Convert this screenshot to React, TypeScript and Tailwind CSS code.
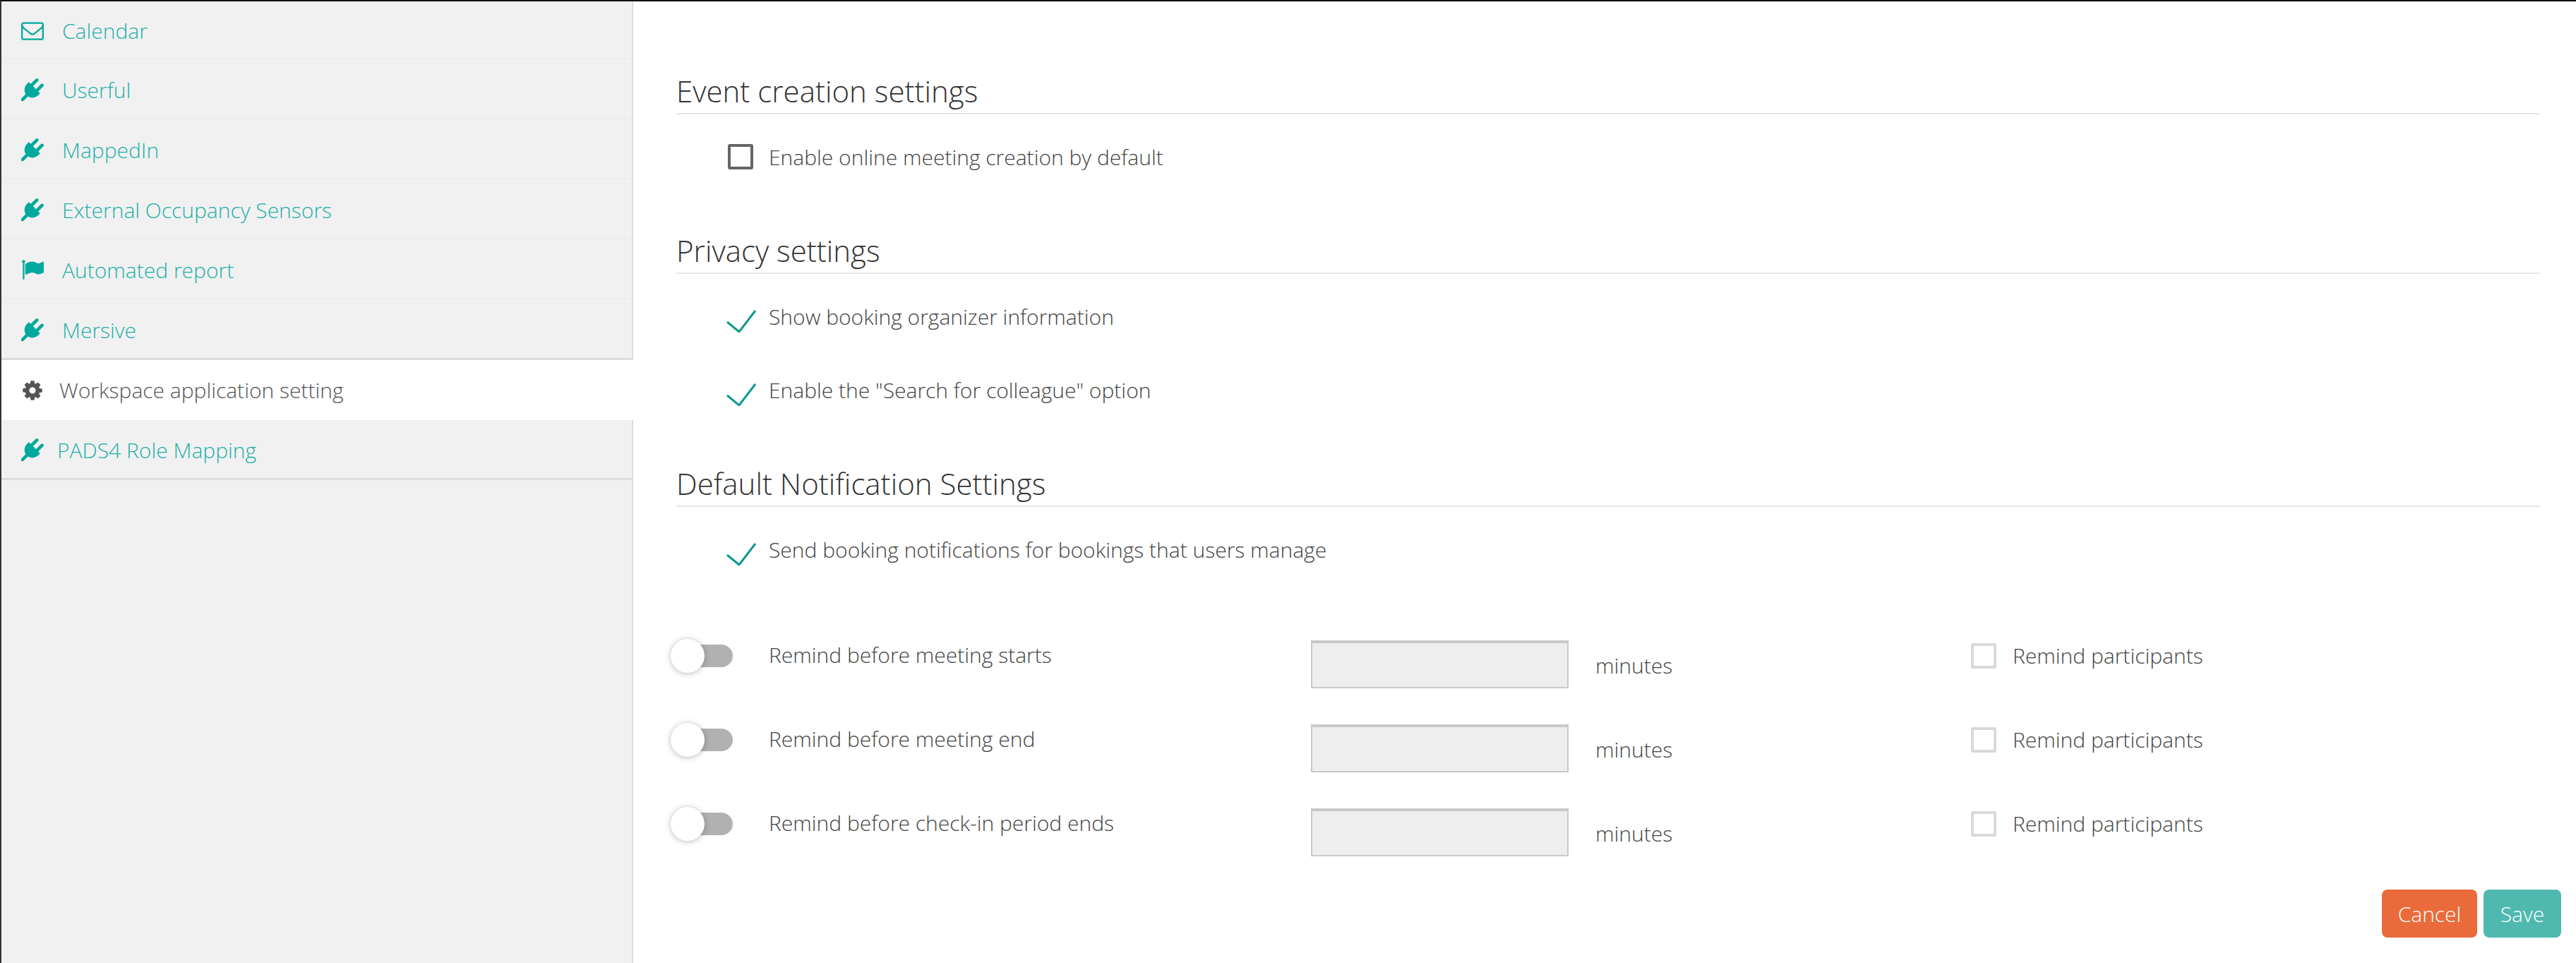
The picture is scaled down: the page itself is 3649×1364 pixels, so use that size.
import React from "react";

const PLUG =
  "M1755 453q37 38 37 90.5t-37 90.5l-401 400 150 150-160 160q-163 163-389.5 186.5t-411.5-100.5l-362 362h-181v-181l362-362q-124-185-100.5-411.5t186.5-389.5l160-160 150 150 400-401q38-37 91-37t90 37 37 90.5-37 90.5l-400 401 234 234 401-400q38-37 91-37t90 37z";
const FLAG =
  "M320 256q0 72-64 110v1266q0 13-9.5 22.5t-22.5 9.5h-64q-13 0-22.5-9.5t-9.5-22.5v-1266q-64-38-64-110 0-53 37.5-90.5t90.5-37.5 90.5 37.5 37.5 90.5zm1472 64v763q0 25-12.5 38.5t-39.5 27.5q-215 116-369 116-61 0-123.5-22t-108.5-48-115.5-48-142.5-22q-192 0-464 146-17 9-33 9-26 0-45-19t-19-45v-742q0-32 31-55 21-14 79-43 236-120 421-120 107 0 200 29t219 88q38 19 88 19 54 0 117.5-21t110-47 88-47 54.5-21q26 0 45 19t19 45z";
const ENVELOPE =
  "M1664 1504v-768q-32 36-69 66-268 206-426 338-51 43-83 67t-86.5 48.5-102.5 24.5h-2q-48 0-102.5-24.5t-86.5-48.5-83-67q-158-132-426-338-37-30-69-66v768q0 13 9.5 22.5t22.5 9.5h1472q13 0 22.5-9.5t9.5-22.5zm0-1051v-24.5l-.5-13-3-12.5-5.5-9-9-7.5-14-2.5h-1472q-13 0-22.5 9.5t-9.5 22.5q0 168 147 284 193 152 401 317 6 5 35 29.5t46 37.5 44.5 31.5 50.5 27.5 43 9h2q20 0 43-9t50.5-27.5 44.5-31.5 46-37.5 35-29.5q208-165 401-317 54-43 100.5-115.5t46.5-131.5zm128-37v1088q0 66-47 113t-113 47h-1472q-66 0-113-47t-47-113v-1088q0-66 47-113t113-47h1472q66 0 113 47t47 113z";
const COG =
  "M1152 896q0-106-75-181t-181-75-181 75-75 181 75 181 181 75 181-75 75-181zm512-109v222q0 12-8 23t-20 13l-185 28q-19 54-39 91 35 50 107 138 10 12 10 25t-9 23q-27 37-99 108t-94 71q-12 0-26-9l-138-108q-44 23-91 38-16 136-29 186-7 28-36 28h-222q-14 0-24.5-8.5t-11.5-21.5l-28-184q-49-16-90-37l-141 107q-10 9-25 9-14 0-25-11-126-114-165-168-7-10-7-23 0-12 8-23 15-21 51-66.5t54-70.5q-27-50-41-99l-183-27q-13-2-21-12.5t-8-23.5v-222q0-12 8-23t19-13l186-28q14-46 39-92-40-57-107-138-10-12-10-24 0-10 9-23 26-36 98.5-107.5t94.5-71.5q13 0 26 10l138 107q44-23 91-38 16-136 29-186 7-28 36-28h222q14 0 24.5 8.5t11.5 21.5l28 184q49 16 90 37l142-107q9-9 24-9 13 0 25 10 129 119 165 170 7 8 7 22 0 12-8 23-15 21-51 66.5t-54 70.5q26 50 41 98l183 28q13 2 21 12.5t8 23.5z";

function Fa({ d, className }: { d: string; className: string }) {
  return (
    <svg viewBox="0 0 1792 1792" className={className} fill="currentColor">
      <path d={d} />
    </svg>
  );
}

const menu = [
  { label: "Calendar", icon: ENVELOPE, gap: "mr-[26px]" },
  { label: "Userful", icon: PLUG, gap: "mr-[26px]" },
  { label: "MappedIn", icon: PLUG, gap: "mr-[26px]" },
  { label: "External Occupancy Sensors", icon: PLUG, gap: "mr-[26px]" },
  { label: "Automated report", icon: FLAG, gap: "mr-[26px]" },
  { label: "Mersive", icon: PLUG, gap: "mr-[26px]" },
  { label: "Workspace application setting", icon: COG, gap: "mr-[22px]", active: true },
  { label: "PADS4 Role Mapping", icon: PLUG, gap: "mr-[19px]" },
];

function SideItem({ item, last }: { item: (typeof menu)[number]; last: boolean }) {
  if (item.active) {
    return (
      <div className="relative -mr-[2px] flex h-[85px] items-center bg-white pl-[28px] text-[#555]">
        <Fa d={item.icon} className={`${item.gap} h-[32px] w-[32px] shrink-0`} />
        <span>{item.label}</span>
      </div>
    );
  }
  const below = last || item.label === "Mersive" ? "border-[#dcdcdc]" : "border-[#eeeeee]";
  return (
    <div className={`flex h-[85px] items-center border-b-[3px] pt-[2px] pl-[28px] text-[#1fb0a8] first:h-[83px] ${below}`}>
      <Fa d={item.icon} className={`${item.gap} h-[32px] w-[32px] shrink-0 text-[#00a99d]`} />
      <span>{item.label}</span>
    </div>
  );
}

function Heading({ children, className }: { children: React.ReactNode; className: string }) {
  return (
    <h2 className={`border-b-[2px] border-[#e6e6e6] pb-[3px] text-[42px] leading-[56px] font-light text-[#333] ${className}`}>
      {children}
    </h2>
  );
}

function Checked({ label, className }: { label: string; className: string }) {
  return (
    <div className={`flex h-[40px] items-center pl-[71px] ${className}`}>
      <svg viewBox="0 0 42 32" className="mt-[12px] mr-[18px] h-[32px] w-[42px] shrink-0" fill="none" stroke="#0f9a8e" strokeWidth="3">
        <path d="M1 17 L18 31 L41 1" />
      </svg>
      <span className="-mt-[1px]">{label}</span>
    </div>
  );
}

function ReminderRow({ label }: { label: string }) {
  return (
    <div className="grid h-[119px] grid-cols-[139px_768px_403px_532px_1fr]">
      <div className="relative mt-[8px] h-[48px] w-[88px]">
        <div className="absolute top-[8px] left-[20px] h-[32px] w-[68px] rounded-r-[16px] bg-[#b1b1b1]" />
        <div className="absolute top-0 left-0 h-[48px] w-[48px] rounded-full bg-white shadow-[0_1px_8px_rgba(0,0,0,0.28)]" />
      </div>
      <div className="mt-[11px] leading-[40px]">{label}</div>
      <div className="mt-[10px] h-[68px] w-[365px] border-[2px] border-t-[4px] border-[#c9c9c9] bg-[#eeeeee]" />
      <div className="mt-[26px] leading-[40px]">minutes</div>
      <div className="flex h-[63px] items-center">
        <div className="mr-[23px] h-[36px] w-[36px] rounded-[3px] border-[4px] border-[#d9d9d9]" />
        <span>Remind participants</span>
      </div>
    </div>
  );
}

export default function App() {
  return (
    <div className="flex h-[1364px] w-[3649px] overflow-hidden border-t-[2px] border-l-[2px] border-t-[#111] border-l-[#333] bg-white font-['Open_Sans',sans-serif] text-[30px] font-light text-[#444]">
      <aside className="w-[895px] shrink-0 border-r-[2px] border-[#dcdcdc] bg-[#f1f1f1]">
        {menu.map((item, i) => (
          <SideItem key={item.label} item={item} last={i === menu.length - 1} />
        ))}
      </aside>
      <main className="flex-1 pr-[51px] pl-[61px]">
        <Heading className="mt-[99px]">Event creation settings</Heading>
        <div className="mt-[40px] flex h-[40px] items-center pl-[73px]">
          <div className="mr-[22px] h-[36px] w-[36px] rounded-[3px] border-[4px] border-[#666]" />
          <span>Enable online meeting creation by default</span>
        </div>
        <Heading className="mt-[85px]">Privacy settings</Heading>
        <Checked className="mt-[41px]" label="Show booking organizer information" />
        <Checked className="mt-[64px]" label={'Enable the "Search for colleague" option'} />
        <Heading className="mt-[84px]">Default Notification Settings</Heading>
        <Checked className="mt-[41px]" label="Send booking notifications for bookings that users manage" />
        <div className="mt-[98px] -ml-[8px]">
          <ReminderRow label="Remind before meeting starts" />
          <ReminderRow label="Remind before meeting end" />
          <ReminderRow label="Remind before check-in period ends" />
        </div>
        <div className="mt-[6px] -mr-[30px] flex justify-end gap-[9px] text-white">
          <button className="h-[68px] w-[135px] rounded-[8px] bg-[#e96a3b] font-light">Cancel</button>
          <button className="h-[68px] w-[110px] rounded-[8px] bg-[#4fb9b0] font-light">Save</button>
        </div>
      </main>
    </div>
  );
}
